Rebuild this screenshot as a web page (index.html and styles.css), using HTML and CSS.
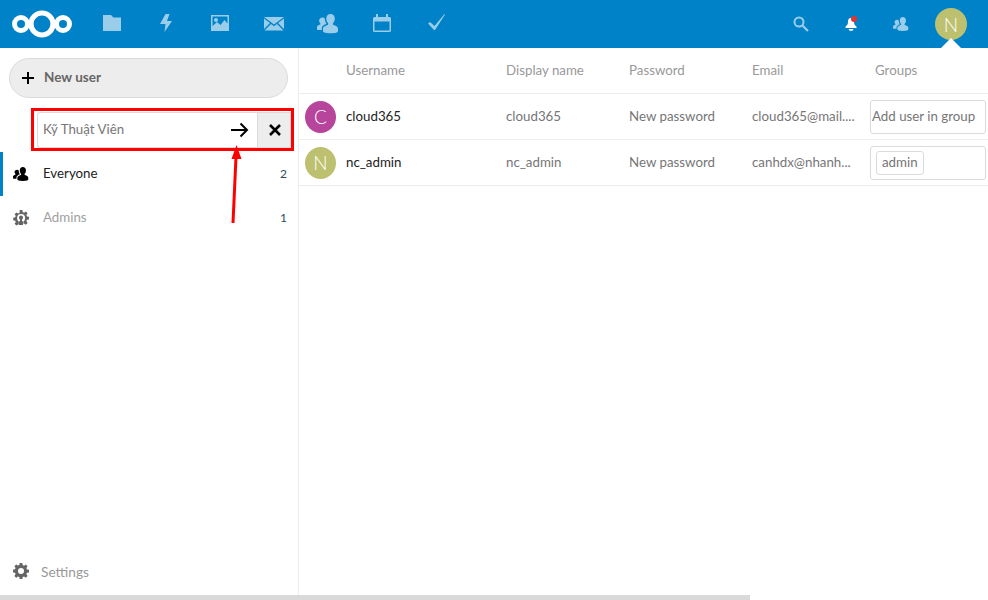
FILE: index.html
```html
<!DOCTYPE html>
<html>
<head>
    <title>Users - Nextcloud</title>
    <link rel="stylesheet" href="styles.css">
</head>
<body>
    <header class="topbar">
        <a class="logo">
            <svg width="60" height="28" viewBox="0 0 60 28">
                <circle cx="9" cy="14" r="6.500" fill="none" stroke="#fff" stroke-width="5"/>
                <circle cx="30" cy="14" r="11" fill="none" stroke="#fff" stroke-width="5.200"/>
                <circle cx="51" cy="14" r="6.500" fill="none" stroke="#fff" stroke-width="5"/>
            </svg>
        </a>
        <nav class="apps">
            <a class="app"><svg width="20" height="20" viewBox="0 0 20 20"><path d="M1 1h8l2.500 2.500H19V17H1z" fill="#fff"/></svg></a>
            <a class="app"><svg width="20" height="20" viewBox="0 0 20 20"><path d="M9.500 0L4 10h5.500L8.500 18 16 7h-5l2.500-7z" fill="#fff"/></svg></a>
            <a class="app"><svg width="20" height="20" viewBox="0 0 20 20"><path fill-rule="evenodd" d="M1 1h18v16H1zM2.500 2.500v9.500l4.500-4 3.500 3 4-5 3 3.500V2.500zM6 4a2 2 0 1 1 0 4 2 2 0 0 1 0-4z" fill="#fff"/></svg></a>
            <a class="app"><svg width="20" height="20" viewBox="0 0 20 20"><path d="M0 3h20L10 10.500zM0 4.500v10.500l6-6zM20 4.500v10.500l-6-6zM7 10l3 2.200 3-2.200 6.500 6.500H.5z" fill="#fff"/></svg></a>
            <a class="app"><svg width="22" height="20" viewBox="0 0 22 20"><path d="M13.500 0c2.600 0 4.300 2 4.300 4.600 0 2-.8 3.500-1.700 4.500-.5.600-.3 1.500.4 1.800 2 .8 4.500 1.600 4.500 3.500v2.800c0 1-2 2-7.500 2S6 18.200 6 17.200v-2.800c0-1.900 3-2.700 4.600-3.500.7-.3.900-1.200.4-1.800-.9-1-1.700-2.500-1.700-4.500C9.300 2 10.900 0 13.500 0z" fill="#fff"/><path d="M5.500 3.500c1 0 1.900.4 2.400 1.100-.1 2 .5 3.800 1.600 5.200-.5.500-4.700 1.500-4.700 4.500V16H1c-.5 0-1-.4-1-1v-2c0-1.300 1.800-1.800 3-2.400.5-.2.600-.8.300-1.200C2.600 8.600 2.100 7.500 2.100 6.800c0-1.900 1.500-3.300 3.400-3.300z" fill="#fff"/></svg></a>
            <a class="app"><svg width="20" height="20" viewBox="0 0 20 20"><path fill-rule="evenodd" d="M4 0h2v3h8V0h2v3h1.500A1.500 1.500 0 0 1 19 4.500v12a1.500 1.500 0 0 1-1.500 1.500h-15A1.500 1.500 0 0 1 1 16.500v-12A1.500 1.500 0 0 1 2.500 3H4zM2.500 7.500v9h15v-9z" fill="#fff"/></svg></a>
            <a class="app"><svg width="20" height="20" viewBox="0 0 20 20"><path d="M2 9.500L4 8l4.500 4L18.500 0l.5.500L9 16H8z" fill="#fff"/></svg></a>
        </nav>
        <div class="tools">
            <a class="tool tool-dim"><svg width="16" height="16" viewBox="0 0 16 16"><circle cx="6" cy="6" r="4.500" fill="none" stroke="#fff" stroke-width="2"/><path d="M9.500 9.500L15 15" stroke="#fff" stroke-width="2.200"/></svg></a>
            <a class="tool"><svg width="16" height="16" viewBox="0 0 16 16"><path d="M8 2c2.200 0 3 1.800 3 4 0 2.500 1 3.500 2.500 4.500V12h-11v-1.500C4 9.500 5 8.500 5 6s.8-4 3-4zM5.500 13h5l-1 1.800h-3z" fill="#fff"/><circle cx="11" cy="3" r="3" fill="#e9322d"/></svg></a>
            <a class="tool tool-dim"><svg width="16" height="16" viewBox="0 0 22 20"><path d="M13.500 0.500c2.600 0 4.300 2 4.300 4.600 0 2-.8 3.500-1.700 4.500-.5.600-.3 1.500.4 1.800 2 .8 4.500 1.600 4.500 3.500v2.800c0 1-2 2-7.500 2S6 18.700 6 17.700v-2.800c0-1.900 3-2.700 4.600-3.500.7-.3.900-1.200.4-1.800-.9-1-1.700-2.500-1.700-4.500 0-2.600 1.600-4.600 4.200-4.600z" fill="#fff"/><path d="M5.500 4c1 0 1.900.4 2.400 1.100-.1 2 .5 3.800 1.600 5.200-.5.500-4.700 1.500-4.700 4.500v1.700H1c-.5 0-1-.4-1-1v-2c0-1.300 1.800-1.800 3-2.400.5-.2.600-.8.300-1.200C2.600 9.100 2.100 8 2.100 7.300 2.100 5.400 3.600 4 5.500 4z" fill="#fff"/></svg></a>
            <a class="tool tool-avatar"><span class="avatar avatar-olive">N</span><span class="caret"></span></a>
        </div>
    </header>

    <div class="content">
        <aside class="sidebar">
            <button class="new-user">
                <svg class="plus" width="12" height="12" viewBox="0 0 12 12"><path d="M6 0v12M0 6h12" stroke="#000" stroke-width="2"/></svg>
                <span>New user</span>
            </button>
            <form class="group-form">
                <div class="group-input">
                    <span class="group-name">Kỹ Thuật Viên</span>
                    <svg width="20" height="16" viewBox="0 0 20 16"><path d="M1 8h16M10.500 1.500L17 8l-6.500 6.500" fill="none" stroke="#000" stroke-width="2"/></svg>
                </div>
                <div class="group-cancel">
                    <svg width="12" height="12" viewBox="0 0 12 12"><path d="M1 1l10 10M11 1L1 11" stroke="#000" stroke-width="2.600"/></svg>
                </div>
            </form>
            <ul class="groups">
                <li class="group group-active">
                    <svg width="16" height="16" viewBox="0 0 22 20"><path d="M13.500 0.500c2.600 0 4.300 2 4.300 4.600 0 2-.8 3.500-1.700 4.500-.5.600-.3 1.500.4 1.800 2 .8 4.500 1.600 4.500 3.500v2.800c0 1-2 2-7.500 2S6 18.700 6 17.700v-2.800c0-1.900 3-2.700 4.600-3.500.7-.3.900-1.200.4-1.800-.9-1-1.700-2.500-1.700-4.500 0-2.600 1.600-4.600 4.200-4.600z" fill="#000"/><path d="M5.500 4c1 0 1.900.4 2.400 1.100-.1 2 .5 3.800 1.600 5.200-.5.500-4.700 1.500-4.700 4.500v1.700H1c-.5 0-1-.4-1-1v-2c0-1.300 1.800-1.800 3-2.400.5-.2.600-.8.300-1.200C2.600 9.100 2.100 8 2.100 7.300 2.100 5.400 3.600 4 5.500 4z" fill="#000"/></svg>
                    <span class="group-label">Everyone</span>
                    <span class="group-count">2</span>
                </li>
                <li class="group group-muted">
                    <svg class="group-icon-muted" width="16" height="16" viewBox="0 0 16 16"><path fill-rule="evenodd" d="M6.700 0h2.600l.4 2.100 1.300.6 1.800-1.200 1.800 1.800-1.200 1.800.6 1.300 2 .4v2.600l-2 .4-.6 1.300 1.200 1.800-1.800 1.800-1.800-1.200-.6.200V11.500c1-.5 1.700-2 1.700-3.500a4 4 0 0 0-8 0c0 1.500.7 3 1.700 3.500v3.100l-.6-.2-1.800 1.200-1.800-1.800 1.200-1.800-.6-1.300-2-.4V7.700l2-.4.600-1.300-1.200-1.800 1.800-1.800 1.800 1.200 1.300-.6z" fill="#000"/><path d="M8 5.500a2 2 0 0 1 2 2c0 1-.5 1.600-1 2v1.500l1 .5v3.500H6V11.500l1-.5V9.500c-.5-.4-1-1-1-2a2 2 0 0 1 2-2z" fill="#000"/></svg>
                    <span class="group-label">Admins</span>
                    <span class="group-count">1</span>
                </li>
            </ul>
            <a class="settings">
                <svg width="16" height="16" viewBox="0 0 16 16"><path fill-rule="evenodd" d="M6.700 0h2.600l.4 2.100 1.300.6 1.800-1.200 1.800 1.800-1.200 1.800.6 1.300 2 .4v2.600l-2 .4-.6 1.300 1.200 1.800-1.800 1.800-1.800-1.200-1.300.6-.4 2.100H6.700l-.4-2.100-1.300-.6-1.800 1.200-1.800-1.800 1.200-1.800-.6-1.300-2-.4V6.700l2-.4.600-1.300-1.200-1.800 1.800-1.800 1.800 1.200 1.300-.6zM8 5a3 3 0 1 0 0 6 3 3 0 0 0 0-6z" fill="#666"/></svg>
                <span>Settings</span>
            </a>
        </aside>

        <main class="users">
            <div class="row row-head">
                <div class="cell"></div>
                <div class="cell cell-text">Username</div>
                <div class="cell cell-text">Display name</div>
                <div class="cell cell-text">Password</div>
                <div class="cell cell-text">Email</div>
                <div class="cell cell-text cell-groups-head">Groups</div>
            </div>
            <div class="row">
                <div class="cell"><span class="avatar avatar-purple">C</span></div>
                <div class="cell cell-text cell-name">cloud365</div>
                <div class="cell cell-text">cloud365</div>
                <div class="cell cell-text">New password</div>
                <div class="cell cell-text">cloud365@mail....</div>
                <div class="cell"><div class="group-select">Add user in group</div></div>
            </div>
            <div class="row">
                <div class="cell"><span class="avatar avatar-olive">N</span></div>
                <div class="cell cell-text cell-name">nc_admin</div>
                <div class="cell cell-text">nc_admin</div>
                <div class="cell cell-text">New password</div>
                <div class="cell cell-text">canhdx@nhanh...</div>
                <div class="cell"><div class="group-select group-select-tags"><span class="tag">admin</span></div></div>
            </div>
        </main>
    </div>

    <div class="scroll-thumb"></div>

    <div class="mark-box"></div>
    <svg class="mark-arrow" width="20" height="90" viewBox="0 0 20 90">
        <path d="M8 80L11 14" stroke="#f00" stroke-width="3" fill="none"/>
        <path d="M12 0L7 14h10z" fill="#f00" transform="translate(-.5 2)"/>
    </svg>
</body>
</html>
```

FILE: styles.css
```css
* {
    box-sizing: border-box;
}

html, body {
    height: 100%;
}

body {
    margin: 0;
    overflow: hidden;
    position: relative;
    background-color: #fff;
    font-family: "Lato", "Open Sans", sans-serif;
    font-size: 13.3px;
    color: #767676;
}

/* top bar */
.topbar {
    display: flex;
    align-items: center;
    height: 48px;
    background-color: #0082c9;
}

.logo {
    display: flex;
    width: 85px;
    padding-left: 12px;
}

.apps {
    display: flex;
}

.app {
    display: flex;
    justify-content: center;
    width: 54px;
    opacity: 0.6;
}

.tools {
    display: flex;
    margin-left: auto;
    padding-right: 12px;
}

.tool {
    display: flex;
    justify-content: center;
    align-items: center;
    position: relative;
    width: 50px;
    height: 48px;
}

.tool-dim {
    opacity: 0.6;
}

.caret {
    position: absolute;
    left: 15px;
    bottom: 0;
    border: 10px solid transparent;
    border-top: 0;
    border-bottom-color: #fff;
}

.avatar {
    display: flex;
    justify-content: center;
    align-items: center;
    width: 32px;
    height: 32px;
    border-radius: 50%;
    color: #fff;
    font-size: 19px;
    font-weight: 300;
}

.avatar-olive {
    background-color: #bdc06e;
}

.avatar-purple {
    background-color: #b7459b;
}

/* sidebar */
.content {
    display: flex;
    height: 552px;
}

.sidebar {
    display: flex;
    flex-direction: column;
    flex: none;
    width: 299px;
    border-right: 1px solid #ededed;
}

.new-user {
    display: flex;
    align-items: center;
    width: 279px;
    height: 40px;
    margin: 10px 0 0 9px;
    padding: 0 0 3px 12px;
    background-color: #ededed;
    border: 1px solid #dbdbdb;
    border-radius: 20px;
    font-family: inherit;
    font-size: 13.500px;
    font-weight: bold;
    color: #666;
}

.plus {
    margin: 3px 10px 0 0;
}

.group-form {
    display: flex;
    height: 36px;
    margin: 14px 7px 4px 37px;
}

.group-input {
    display: flex;
    align-items: center;
    justify-content: space-between;
    flex: 1;
    padding: 0 7px 0 5px;
    border: 1px solid #dbdbdb;
    border-right: 0;
    border-radius: 3px 0 0 3px;
}

.group-name {
    padding-bottom: 3px;
    color: #767676;
}

.group-cancel {
    display: flex;
    justify-content: center;
    align-items: center;
    width: 34px;
    padding-left: 1px;
    background-color: #ededed;
    border: 1px solid #dbdbdb;
}

.groups {
    margin: 0;
    padding: 0;
    list-style: none;
}

.group {
    display: flex;
    align-items: center;
    height: 44px;
    padding: 0 11px 0 13px;
    border-left: 3px solid transparent;
}

.group svg {
    margin-left: -3px;
}

.group-active {
    border-left-color: #0082c9;
    color: #222;
}

.group-muted {
    color: #a0a0a0;
}

.group-icon-muted {
    opacity: 0.6;
}

.group-label {
    margin-left: 14px;
    padding-bottom: 3px;
}

.group-count {
    margin-left: auto;
    padding-bottom: 1px;
    font-size: 12px;
    color: #2b4a5e;
}

.settings {
    display: flex;
    align-items: center;
    gap: 12px;
    height: 44px;
    margin-top: auto;
    margin-bottom: 7px;
    padding-left: 13px;
    font-size: 13.700px;
    color: #999;
}

/* user list */
.users {
    flex: 1;
    min-width: 0;
}

.row {
    display: grid;
    grid-template-columns: 47px 160px 123px 123px 118px 116px;
    align-items: center;
    height: 46px;
    border-bottom: 1px solid #ededed;
}

.row-head {
    color: #999;
}

.cell {
    display: flex;
    align-items: center;
    min-width: 0;
    padding-right: 10px;
    white-space: nowrap;
}

.cell:first-child {
    padding-left: 6px;
}

.cell:last-child {
    padding-right: 0;
}

.cell-text {
    padding-bottom: 2px;
}

.cell-name {
    color: #222;
}

.cell-groups-head {
    padding-left: 5px;
}

.group-select {
    display: flex;
    align-items: center;
    width: 116px;
    height: 34px;
    padding: 0 0 2px 1px;
    border: 1px solid #dbdbdb;
    border-radius: 3px;
}

.group-select-tags {
    padding: 0 0 0 5px;
}

.tag {
    display: flex;
    align-items: center;
    height: 24px;
    padding: 0 5px 2px;
    border: 1px solid #dbdbdb;
    border-radius: 3px;
}

/* scrollbar thumb over the page */
.scroll-thumb {
    position: absolute;
    left: 0;
    bottom: 0;
    width: 750px;
    height: 5px;
    background-color: #d9d9d9;
}

/* red annotations drawn on top of the screenshot */
.mark-box {
    position: absolute;
    left: 31px;
    top: 108px;
    width: 263px;
    height: 43px;
    border: 3px solid #f00;
}

.mark-arrow {
    position: absolute;
    left: 225px;
    top: 143px;
}
```
